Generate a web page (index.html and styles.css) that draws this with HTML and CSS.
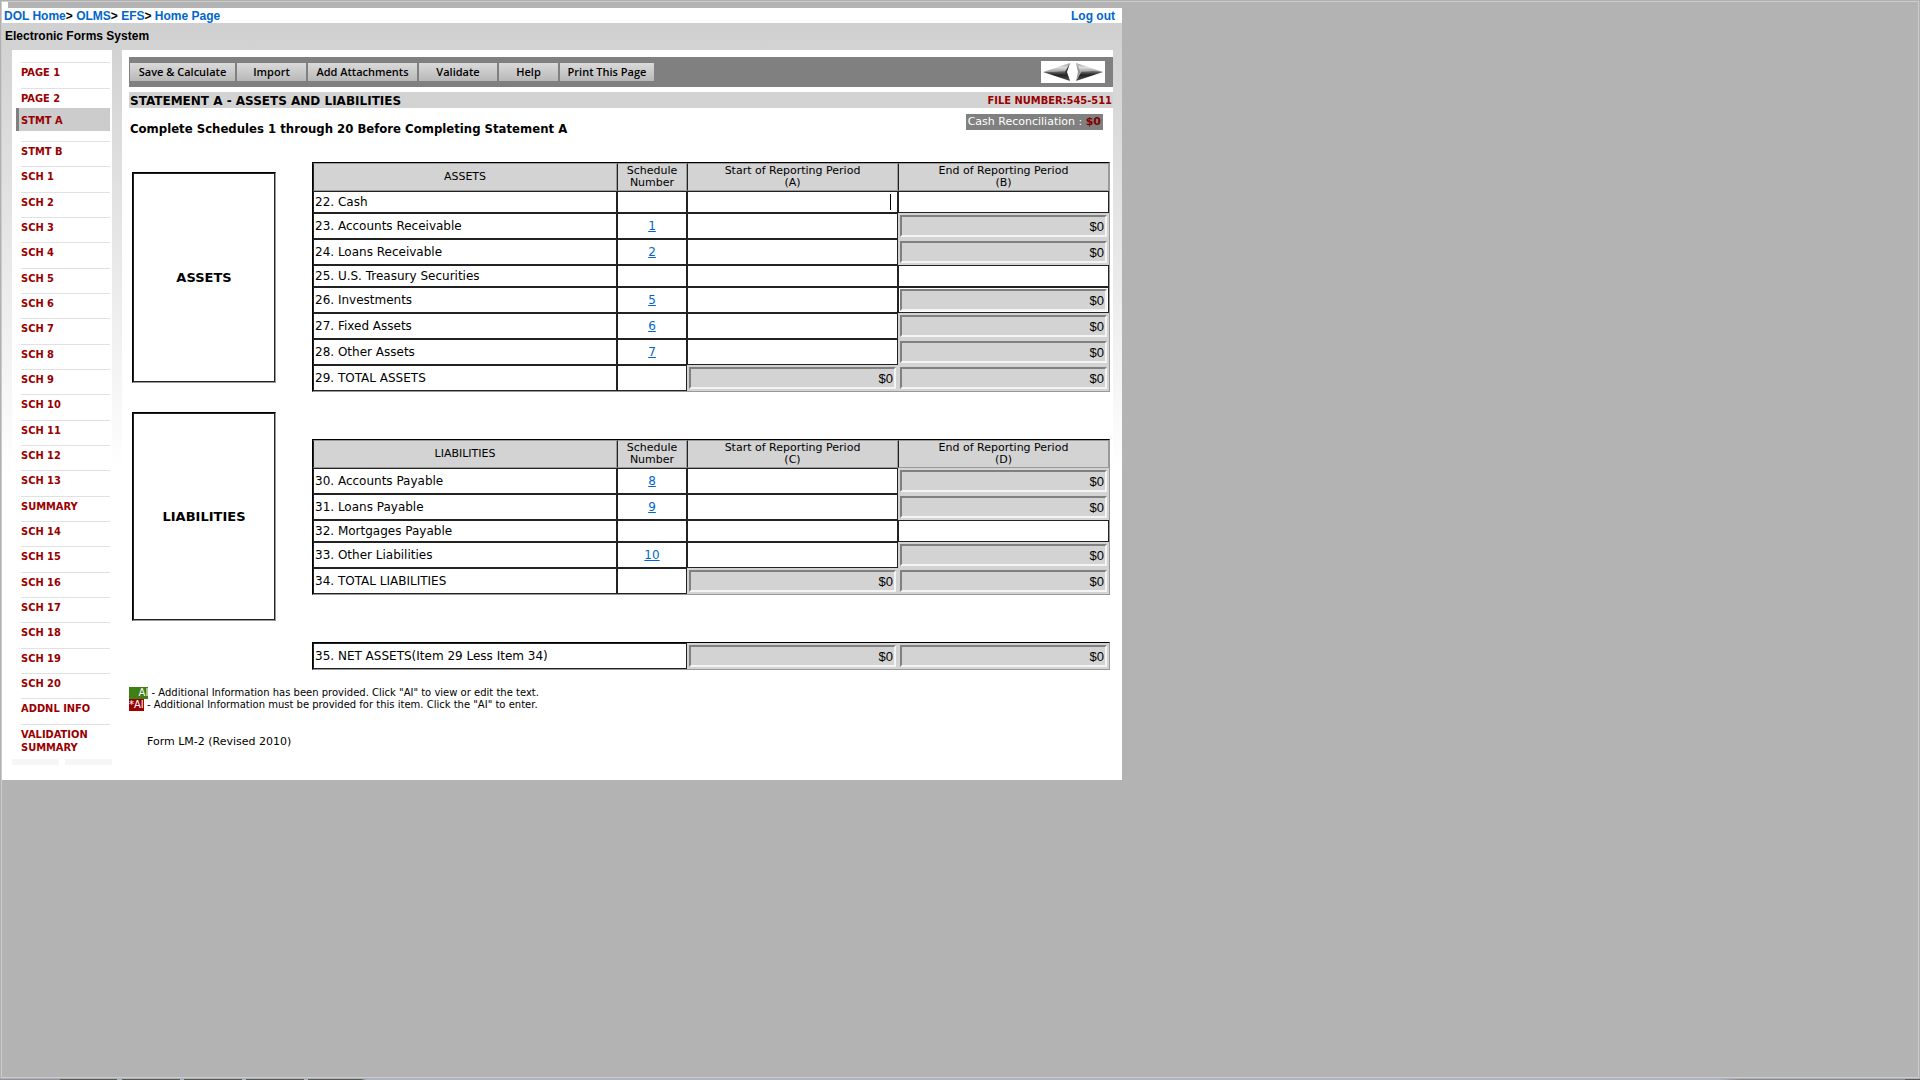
FILE: index.html
```html
<!DOCTYPE html>
<html lang="en">
<head>
<meta charset="utf-8">
<title>Electronic Forms System - Statement A</title>
<link rel="stylesheet" href="styles.css">
</head>
<body>
<div class="frame">
  <div class="frame-inner">
    <div class="tab-stub"></div>
    <div class="page">
      <header>
        <div class="crumbs">
          <nav aria-label="Breadcrumb"><a href="#">DOL Home</a>&gt; <a href="#">OLMS</a>&gt; <a href="#">EFS</a>&gt; <a href="#">Home Page</a></nav>
          <a href="#">Log out</a>
        </div>
      </header>
      <div class="shell">
        <div class="system-name">Electronic Forms System</div>
        <div class="columns">
          <aside class="sidebar">
            <ul class="menu">
              <li class="page-1"><a href="#">PAGE 1</a></li>
              <li class="page-2"><a href="#">PAGE 2</a></li>
              <li class="current"><a href="#">STMT A</a></li>
              <li><a href="#">STMT B</a></li>
              <li><a href="#">SCH 1</a></li>
              <li><a href="#">SCH 2</a></li>
              <li><a href="#">SCH 3</a></li>
              <li><a href="#">SCH 4</a></li>
              <li><a href="#">SCH 5</a></li>
              <li><a href="#">SCH 6</a></li>
              <li><a href="#">SCH 7</a></li>
              <li><a href="#">SCH 8</a></li>
              <li><a href="#">SCH 9</a></li>
              <li><a href="#">SCH 10</a></li>
              <li><a href="#">SCH 11</a></li>
              <li><a href="#">SCH 12</a></li>
              <li><a href="#">SCH 13</a></li>
              <li><a href="#">SUMMARY</a></li>
              <li><a href="#">SCH 14</a></li>
              <li><a href="#">SCH 15</a></li>
              <li><a href="#">SCH 16</a></li>
              <li><a href="#">SCH 17</a></li>
              <li><a href="#">SCH 18</a></li>
              <li><a href="#">SCH 19</a></li>
              <li><a href="#">SCH 20</a></li>
              <li><a href="#">ADDNL INFO</a></li>
              <li class="last"><a href="#">VALIDATION SUMMARY</a></li>
            </ul>
            <div class="menu-foot"><span></span><span></span></div>
          </aside>
          <main class="content">
            <div class="toolbar">
              <div class="buttons">
                <button type="button" class="w-save">Save &amp; Calculate</button>
                <button type="button" class="w-import">Import</button>
                <button type="button" class="w-attach">Add Attachments</button>
                <button type="button" class="w-validate">Validate</button>
                <button type="button" class="w-help">Help</button>
                <button type="button" class="w-print">Print This Page</button>
              </div>
              <div class="pager">
                <a href="#" aria-label="Previous page"><svg width="28" height="20" viewBox="0 0 28 20">
                  <defs>
                    <linearGradient id="lt" x1="0" y1="0" x2="0" y2="1"><stop offset="0" stop-color="#999"/><stop offset=".5" stop-color="#ddd"/><stop offset="1" stop-color="#999"/></linearGradient>
                    <linearGradient id="dk" x1="0" y1="0" x2="0" y2="1"><stop offset="0" stop-color="#777"/><stop offset=".4" stop-color="#222"/><stop offset="1" stop-color="#555"/></linearGradient>
                  </defs>
                  <path d="M0 10 27 1 23 10Z" fill="url(#lt)"/><path d="M0 10 10 10 23 9 27 19Z" fill="url(#dk)"/><path d="M27 1 22 10 27 19 24 10Z" fill="#333"/></svg></a>
                <a href="#" aria-label="Next page"><svg width="28" height="20" viewBox="0 0 28 20">
                  <path d="M28 10 1 1 6 10Z" fill="url(#lt)"/><path d="M28 10 18 9 6 10 1 19Z" fill="url(#dk)"/><path d="M1 1 6 10 1 19 3 10Z" fill="#999"/></svg></a>
              </div>
            </div>
            <div class="title-bar">
              <h1>STATEMENT A - ASSETS AND LIABILITIES</h1>
              <span class="file-number">FILE NUMBER:545-511</span>
            </div>
            <div class="intro">
              <h2>Complete Schedules 1 through 20 Before Completing Statement A</h2>
              <div class="recon">Cash Reconciliation : <b>$0</b></div>
            </div>
            <div class="statement">
              <div class="section-names">
                <div class="section-box assets">ASSETS</div>
                <div class="section-box liabilities">LIABILITIES</div>
              </div>
              <div class="tables">
                <table>
                  <colgroup><col><col class="c-sch"><col class="c-amt"><col class="c-amt"></colgroup>
                  <thead><tr><th>ASSETS</th><th>Schedule Number</th><th>Start of Reporting Period<br>(A)</th><th>End of Reporting Period<br>(B)</th></tr></thead>
                  <tbody>
                    <tr class="short"><td>22. Cash</td><td></td><td class="active"><input type="text" aria-label="Cash, start of period"></td><td><input type="text" aria-label="Cash, end of period"></td></tr>
                    <tr><td>23. Accounts Receivable</td><td><a href="#">1</a></td><td><input type="text" aria-label="Accounts Receivable, start of period"></td><td class="calc"><input type="text" readonly value="$0" aria-label="Accounts Receivable, end of period"></td></tr>
                    <tr><td>24. Loans Receivable</td><td><a href="#">2</a></td><td><input type="text" aria-label="Loans Receivable, start of period"></td><td class="calc"><input type="text" readonly value="$0" aria-label="Loans Receivable, end of period"></td></tr>
                    <tr class="short"><td>25. U.S. Treasury Securities</td><td></td><td><input type="text" aria-label="U.S. Treasury Securities, start of period"></td><td><input type="text" aria-label="U.S. Treasury Securities, end of period"></td></tr>
                    <tr><td>26. Investments</td><td><a href="#">5</a></td><td><input type="text" aria-label="Investments, start of period"></td><td class="calc boxed"><input type="text" readonly value="$0" aria-label="Investments, end of period"></td></tr>
                    <tr><td>27. Fixed Assets</td><td><a href="#">6</a></td><td><input type="text" aria-label="Fixed Assets, start of period"></td><td class="calc"><input type="text" readonly value="$0" aria-label="Fixed Assets, end of period"></td></tr>
                    <tr><td>28. Other Assets</td><td><a href="#">7</a></td><td><input type="text" aria-label="Other Assets, start of period"></td><td class="calc"><input type="text" readonly value="$0" aria-label="Other Assets, end of period"></td></tr>
                    <tr><td>29. TOTAL ASSETS</td><td></td><td class="calc"><input type="text" readonly value="$0" aria-label="Total Assets, start of period"></td><td class="calc"><input type="text" readonly value="$0" aria-label="Total Assets, end of period"></td></tr>
                  </tbody>
                </table>
                <table>
                  <colgroup><col><col class="c-sch"><col class="c-amt"><col class="c-amt"></colgroup>
                  <thead><tr><th>LIABILITIES</th><th>Schedule Number</th><th>Start of Reporting Period<br>(C)</th><th>End of Reporting Period<br>(D)</th></tr></thead>
                  <tbody>
                    <tr><td>30. Accounts Payable</td><td><a href="#">8</a></td><td><input type="text" aria-label="Accounts Payable, start of period"></td><td class="calc"><input type="text" readonly value="$0" aria-label="Accounts Payable, end of period"></td></tr>
                    <tr><td>31. Loans Payable</td><td><a href="#">9</a></td><td><input type="text" aria-label="Loans Payable, start of period"></td><td class="calc"><input type="text" readonly value="$0" aria-label="Loans Payable, end of period"></td></tr>
                    <tr class="short"><td>32. Mortgages Payable</td><td></td><td><input type="text" aria-label="Mortgages Payable, start of period"></td><td><input type="text" aria-label="Mortgages Payable, end of period"></td></tr>
                    <tr><td>33. Other Liabilities</td><td><a href="#">10</a></td><td><input type="text" aria-label="Other Liabilities, start of period"></td><td class="calc"><input type="text" readonly value="$0" aria-label="Other Liabilities, end of period"></td></tr>
                    <tr><td>34. TOTAL LIABILITIES</td><td></td><td class="calc"><input type="text" readonly value="$0" aria-label="Total Liabilities, start of period"></td><td class="calc"><input type="text" readonly value="$0" aria-label="Total Liabilities, end of period"></td></tr>
                  </tbody>
                </table>
                <table>
                  <colgroup><col><col class="c-amt"><col class="c-amt"></colgroup>
                  <tbody>
                    <tr><td>35. NET ASSETS(Item 29 Less Item 34)</td><td class="calc"><input type="text" readonly value="$0" aria-label="Net Assets, start of period"></td><td class="calc"><input type="text" readonly value="$0" aria-label="Net Assets, end of period"></td></tr>
                  </tbody>
                </table>
              </div>
            </div>
            <div class="legend">
              <div><span class="tag given">&nbsp;&nbsp; AI</span> - Additional Information has been provided. Click "AI" to view or edit the text.</div>
              <div><span class="tag needed">*AI</span> - Additional Information must be provided for this item. Click the "AI" to enter.</div>
            </div>
            <footer>Form LM-2 (Revised 2010)</footer>
          </main>
        </div>
      </div>
    </div>
  </div>
</div>
<div class="taskbar-edge"></div>
</body>
</html>
```
FILE: styles.css
```css
* { box-sizing: border-box; }

body {
  margin: 0;
  min-height: 100vh;
  display: flex;
  flex-direction: column;
  background: #b3b3b3;
  color: #000;
  font: 12px/16px "DejaVu Sans", sans-serif;
}

a { color: #06c; }

.frame {
  flex: 1;
  display: flex;
  border: 1px solid #b0b0b0;
}

.frame-inner {
  flex: 1;
  border: 1px solid #ccc;
}

.tab-stub {
  width: 6px;
  height: 6px;
  background: #fff;
}

.taskbar-edge {
  height: 1px;
  background: linear-gradient(to right, #8f93a0 60px, #555a5a 60px 117px, #aab4cc 117px 122px, #555a5a 122px 180px, #aab4cc 180px 184px, #555a5a 184px 242px, #aab4cc 242px 246px, #555a5a 246px 304px, #aab4cc 304px 308px, #555a5a 308px 361px, #aab4cc 366px calc(100% - 200px), #85888f calc(100% - 180px) calc(100% - 15px), #555a5a calc(100% - 15px));
}

.page {
  max-width: 1120px;
  background: #fff;
}

.crumbs {
  height: 15px;
  padding: 0 7px 0 2px;
  display: flex;
  justify-content: space-between;
  font: bold 12px/16px "Liberation Sans", Arial, sans-serif;
}

.crumbs a { text-decoration: none; }

.shell {
  background: linear-gradient(#d0d0d0, #d3d3d3 30px, #fff 450px);
}

.system-name {
  height: 27px;
  padding-left: 3px;
  font: bold 12px/26px "Liberation Sans", Arial, sans-serif;
}

.columns {
  display: flex;
  gap: 10px;
  padding: 0 9px 0 10px;
}

/* Schedule menu */
.sidebar {
  width: 100px;
  flex: none;
  padding-top: 12px;
  background: #fff;
}

.menu {
  list-style: none;
  margin: 0;
  padding: 0 2px 0 4px;
  font: bold 11px/13px "DejaVu Sans Condensed", "DejaVu Sans", sans-serif;
}

.menu li {
  height: 25px;
  margin-left: 5px;
  padding-top: 3px;
  border-top: 1px solid #e1e1e1;
}

.menu li:nth-child(3n+2) { height: 26px; }

.menu a {
  color: #900;
  text-decoration: none;
}

.menu li.page-1 { height: 26px; }
.menu li.page-2 { height: 20px; }

.menu li.current {
  height: 23px;
  margin: 0 0 10px;
  padding: 6px 0 0 2px;
  border: 0;
  border-left: 3px solid #808080;
  background: #ccc;
}

.menu li.last { height: 35px; }

.menu-foot {
  display: flex;
  gap: 6px;
  height: 6px;
}

.menu-foot span {
  flex: 1;
  background: #f6f6f6;
}

/* Main column */
.content {
  flex: 1;
  padding: 7px 0 29px 7px;
  background: #fff;
}

.toolbar {
  display: flex;
  justify-content: space-between;
  align-items: center;
  height: 30px;
  padding: 0 8px 0 1px;
  background: #808080;
}

.buttons {
  display: flex;
  gap: 2px;
}

.buttons button {
  height: 18px;
  padding: 0;
  border: 0;
  background: linear-gradient(#dadada, #b8b8b8);
  color: #000;
  font: 600 11px/18px "Open Sans", sans-serif;
  white-space: nowrap;
}

.w-save { width: 105px; }
.w-import { width: 69px; }
.w-attach { width: 109px; }
.w-validate { width: 78px; }
.w-help { width: 59px; }
.w-print { width: 94px; }

.pager {
  display: flex;
  justify-content: space-between;
  width: 64px;
  height: 22px;
  padding: 1px 2px;
  background: #fff;
}

.pager svg { display: block; }

.title-bar {
  display: flex;
  justify-content: space-between;
  height: 16px;
  margin-top: 5px;
  padding: 0 1px;
  background: #d3d3d3;
}

h1, h2 {
  margin: 0;
  font-size: 12px;
  line-height: 18px;
}

.file-number {
  color: #900;
  font: bold 11px/18px "DejaVu Sans Condensed", "DejaVu Sans", sans-serif;
}

.intro {
  display: flex;
  justify-content: space-between;
  align-items: flex-start;
  padding: 6px 10px 0 1px;
}

.intro h2 {
  padding-top: 6px;
  font: bold 13px/18px "DejaVu Sans Condensed", "DejaVu Sans", sans-serif;
}

.recon {
  padding: 0 2px;
  background: #808080;
  color: #fff;
  font-size: 11px;
}

.recon b { color: #800000; }

.statement {
  display: flex;
  gap: 36px;
  margin-top: 24px;
  padding: 0 3px;
}

.section-names {
  width: 144px;
  flex: none;
  display: flex;
  flex-direction: column;
  gap: 29px;
  padding-top: 10px;
}

.section-box {
  display: flex;
  align-items: center;
  justify-content: center;
  border: 1px solid;
  border-color: #000 #999 #999 #000;
  box-shadow: inset 0 0 0 1px #222;
  font-size: 13px;
  font-weight: bold;
}

.assets { height: 211px; }
.liabilities { height: 209px; }

.tables {
  flex: 1;
  display: flex;
  flex-direction: column;
  gap: 47px;
}

table {
  width: 100%;
  table-layout: fixed;
  border: 1px solid;
  border-color: #000 #999 #999 #000;
  border-spacing: 0;
}

.c-sch { width: 70px; }
.c-amt { width: 211px; }

th {
  height: 28px;
  padding: 0;
  border: 1px solid;
  border-color: #999 #999 #999 #222;
  background: #d3d3d3;
  font-size: 11px;
  font-weight: normal;
  line-height: 12px;
}

td {
  height: 26px;
  padding: 0;
  border: 1px solid #222;
  text-align: center;
}

td:first-child {
  padding-left: 1px;
  text-align: left;
}

.short td { height: 22px; }

td input {
  display: block;
  width: 100%;
  height: 18px;
  padding: 0 4px;
  border: 0;
  background: #fff;
  text-align: right;
  font: 13px/18px "Liberation Sans", Arial, sans-serif;
}

.active { position: relative; }

/* Text cursor of the field being edited */
.active::after {
  content: "";
  position: absolute;
  top: 2px;
  right: 6px;
  width: 1px;
  height: 16px;
  background: #000;
}

.calc {
  padding: 0 1px;
  border-color: #d3d3d3;
  background: #d3d3d3;
}

.calc input {
  height: 22px;
  padding: 0 1px;
  border: 2px solid;
  border-color: #808080 #f4f4f4 #f4f4f4 #808080;
  background: #d3d3d3;
}

.boxed {
  border-color: #222;
  background: #fff;
}

.legend {
  margin-top: 17px;
  font-size: 10px;
  line-height: 12px;
}

.tag {
  display: inline-block;
  color: #fff;
}

.given { background: #3f7f14; }
.needed { background: #900; }

footer {
  margin-top: 22px;
  padding-left: 18px;
  font-size: 11px;
  line-height: 18px;
}
```
